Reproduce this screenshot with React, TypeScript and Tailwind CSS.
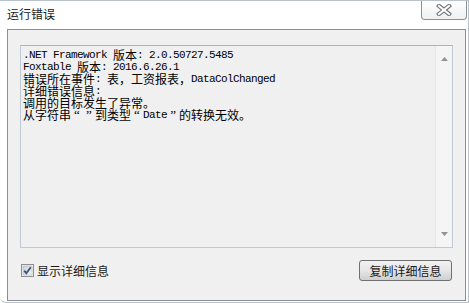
import React from "react";

const CJK = '"Noto Sans CJK SC", "Microsoft YaHei", sans-serif';

function Line({ text }: { text: string }) {
  const parts: { s: string; ascii: boolean }[] = [];
  for (const ch of text) {
    const ascii = ch.charCodeAt(0) < 128;
    const last = parts[parts.length - 1];
    if (last && last.ascii === ascii && ascii) last.s += ch;
    else parts.push({ s: ch, ascii });
  }
  return (
    <div className="h-[12px] leading-[12px] whitespace-pre flex items-center">
      {parts.map((p, i) =>
        p.ascii ? (
          <span
            key={i}
            className="font-['Liberation_Mono',monospace] text-[11px] tracking-[-0.6px] leading-[12px]"
          >
            {p.s}
          </span>
        ) : p.s === "“" || p.s === "”" ? (
          <span
            key={i}
            className="inline-block w-[12px] text-center font-['Liberation_Serif',serif] text-[13px] leading-[12px]"
          >
            {p.s}
          </span>
        ) : (
          <span
            key={i}
            className="inline-block w-[12px] text-center font-['Noto_Sans_CJK_SC',sans-serif] text-[12px] leading-[12px]"
          >
            {p.s}
          </span>
        )
      )}
    </div>
  );
}

function CloseGlyph() {
  return (
    <svg width="16" height="12" viewBox="0 0 16 12">
      <path d="M3 2 L13 10 M13 2 L3 10" stroke="#6f7378" strokeWidth="4.2" strokeLinecap="square" />
      <path d="M3 2 L13 10 M13 2 L3 10" stroke="#ffffff" strokeWidth="2" strokeLinecap="square" />
    </svg>
  );
}

function CheckBox() {
  return (
    <svg width="13" height="13" viewBox="0 0 13 13">
      <defs>
        <linearGradient id="cbg" x1="0" y1="0" x2="1" y2="1">
          <stop offset="0" stopColor="#cbcfd5" />
          <stop offset="1" stopColor="#f6f6f6" />
        </linearGradient>
      </defs>
      <rect x="0.5" y="0.5" width="12" height="12" fill="#f4f4f4" stroke="#8e8f8f" />
      <rect x="2" y="2" width="9" height="9" fill="url(#cbg)" stroke="#b2b4b8" strokeWidth="0.6" />
      <path d="M3.2 6.6 L5.3 9.2 L9.8 3.2" fill="none" stroke="#3c5488" strokeWidth="1.9" />
    </svg>
  );
}

export default function App() {
  const lines = [
    ".NET Framework 版本: 2.0.50727.5485",
    "Foxtable 版本: 2016.6.26.1",
    "错误所在事件: 表，工资报表，DataColChanged",
    "详细错误信息:",
    "调用的目标发生了异常。",
    "从字符串“”到类型“Date”的转换无效。",
  ];
  return (
    <div className="w-[469px] h-[303px] bg-white border-t border-r border-b border-[#b9c3cc] rounded-bl-[6px] flex flex-col overflow-hidden">
      <div className="h-[28px] flex items-start justify-between pl-[7px] pr-[1px]">
        <span
          className="mt-[5px] text-[12px] leading-[16px] text-[#1a1a1a]"
          style={{ fontFamily: CJK }}
        >
          运行错误
        </span>
        <div className="w-[46px] h-[19px] border border-t-0 border-[#8d9196] rounded-b-[4px] bg-gradient-to-b from-white to-[#eef0f2] flex items-center justify-center">
          <CloseGlyph />
        </div>
      </div>
      <div className="ml-[7px] mr-[2px] h-[272px] border border-[#8b8e93] bg-[#f0f0f0] flex flex-col">
        <div className="ml-[12px] mt-[15px] w-[433px] h-[203px] border border-[#bfc9d6] border-t-[#a9b4c2] bg-[#f0f0f0] flex">
          <div className="flex-1 pl-[2px] pt-[3px] text-black">
            {lines.map((l, i) => (
              <Line key={i} text={l} />
            ))}
          </div>
          <div className="w-[17px] h-full bg-[#f5f5f5] border-l border-[#e6e6e6] flex flex-col items-center justify-between py-[11px]">
            <svg width="7" height="4" viewBox="0 0 7 4">
              <path d="M0 4 L3.5 0 L7 4 Z" fill="#8f9296" />
            </svg>
            <svg width="7" height="4" viewBox="0 0 7 4">
              <path d="M0 0 L7 0 L3.5 4 Z" fill="#8f9296" />
            </svg>
          </div>
        </div>
        <div className="mt-[12px] flex items-center justify-between pl-[13px] pr-[13px]">
          <div className="flex items-center gap-[3px]">
            <CheckBox />
            <span
              className="text-[12px] leading-[16px] text-[#1a1a1a]"
              style={{ fontFamily: CJK }}
            >
              显示详细信息
            </span>
          </div>
          <div
            className="w-[93px] h-[21px] border border-[#707070] rounded-[3px] bg-gradient-to-b from-[#f2f2f2] via-[#e6e6e6] to-[#cfcfcf] flex items-center justify-center text-[12px] leading-[16px] text-[#1a1a1a]"
            style={{ fontFamily: CJK }}
          >
            复制详细信息
          </div>
        </div>
      </div>
    </div>
  );
}
